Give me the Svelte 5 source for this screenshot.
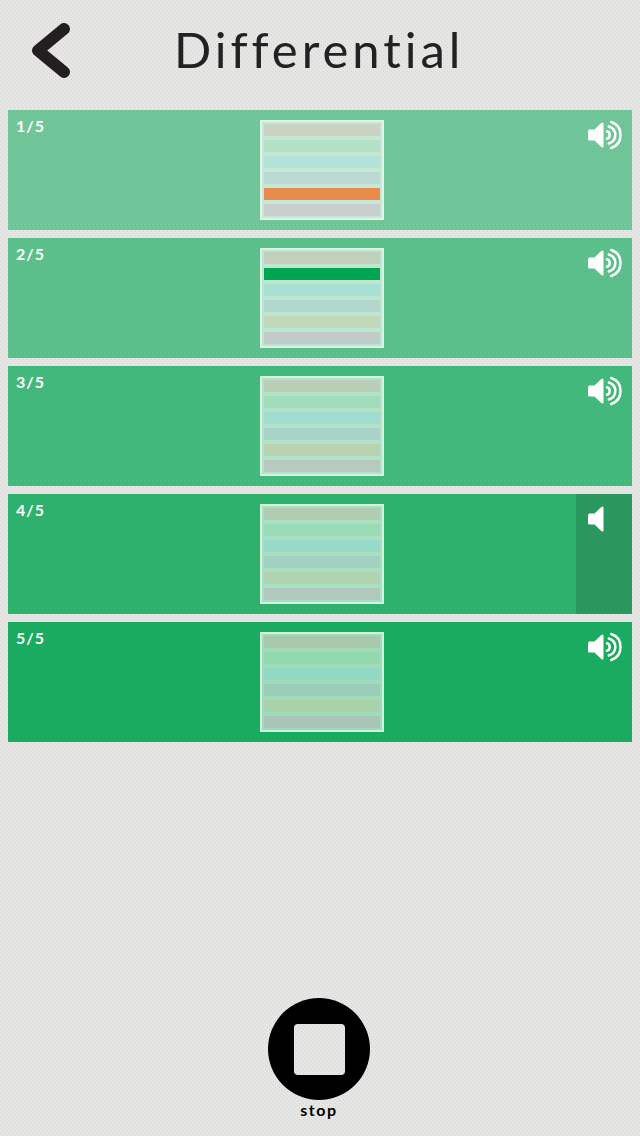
<script>
  const rows = [
    { n: 1, color: '#74c99d', line: '#e0f4e9', fill: '#c5e8d5', bars: ['#cad2c1', '#b3e1c8', '#b3e2da', '#bad9d5', '#e88b4c', '#c8cecc'] },
    { n: 2, color: '#5ec38e', line: '#daf3e5', fill: '#bce6cf', bars: ['#c2cfbb', '#00a550', '#a9e0d4', '#b2d7ce', '#c2d8ba', '#c1ccc8'] },
    { n: 3, color: '#46bb7f', line: '#d6f2e1', fill: '#b2e2c8', bars: ['#b9cdb7', '#a1ddbc', '#a0ddcf', '#a9d3c8', '#b9d3b2', '#b7c9c1'] },
    { n: 4, color: '#2fb16e', line: '#d3f1df', fill: '#aae0c2', bars: ['#b0ccb1', '#99dbb6', '#98dac9', '#a2d1c4', '#b2d3af', '#b0c8bd'], muted: true },
    { n: 5, color: '#1aab60', line: '#cff0dc', fill: '#a1dcba', bars: ['#a8c9ac', '#92d8b0', '#91d8c5', '#9aceba', '#a9d2aa', '#a8c5b7'] }
  ];
</script>

<main class="textured">
  <header>
    <button class="back" aria-label="Back">
      <svg width="40" height="56" viewBox="0 0 40 56"><path d="M33 7 7 28.5 33 50" /></svg>
    </button>
    <h1>Differential</h1>
  </header>

  <section>
    {#each rows as row}
      <article style:background-color={row.color} class:textured={row.n < 4} class:faint={row.n < 4}>
        <span class="count">{row.n}/5</span>
        <div class="pattern" style:background={row.fill} style:border-color={row.line}>
          {#each row.bars as bar}<i style:background={bar}></i>{/each}
        </div>
        <button class="sound" class:muted={row.muted} aria-label="Sound">
          <svg width="36" height="32" viewBox="0 0 36 32">
            <path class="cone" d="M1 12Q1 10.5 2.5 10.5H7.5L14.3 4Q16.5 2.5 16.5 5V27Q16.5 29.5 14.3 28L7.5 21.5H2.5Q1 21.5 1 20Z" />
            {#if !row.muted}
              <path class="wave" d="M20 12.3Q22.7 13 22.7 16T20 19.7M21.8 7.5Q28.3 9.5 28.3 16T21.8 24.5M24.2 3Q33.5 6 33.5 16T24.2 29" />
            {/if}
          </svg>
        </button>
      </article>
    {/each}
  </section>

  <footer>
    <button class="stop"><span class="disc"><span class="textured"></span></span><b>stop</b></button>
  </footer>
</main>

<style>
  main {
    box-sizing: border-box;
    width: 640px;
    height: 1136px;
    display: flex;
    flex-direction: column;
    background-color: #e9e9e7;
    font-family: Lato, sans-serif;
  }
  .textured {
    --dot: rgba(0, 0, 0, .09);
    background-image:
      radial-gradient(circle at 1.5px 1.5px, var(--dot) .5px, transparent 1.2px),
      radial-gradient(circle at 1.5px 1.5px, var(--dot) .5px, transparent 1.2px);
    background-size: 4px 4px;
    background-position: 0 0, 2px 2px;
  }
  .faint { --dot: rgba(0, 0, 0, .08); }
  button { border: 0; padding: 0; background: none; font: inherit; color: inherit; }
  svg { display: block; }
  header { height: 110px; display: grid; grid-template-columns: 176px 1fr; }
  .back { padding: 22px 0 0 31px; align-self: start; }
  .back path { fill: none; stroke: #231f20; stroke-width: 12; stroke-linecap: round; stroke-linejoin: round; }
  h1 { margin: 19px 0 0 -2px; font-size: 49px; line-height: 60px; font-weight: 400; letter-spacing: 3.95px; color: #222; font-variant-ligatures: none; white-space: nowrap; }
  section { padding: 0 8px; display: grid; gap: 8px; }
  article { height: 120px; display: grid; grid-template-columns: 252px 124px 1fr 56px; }
  .count { padding: 6px 8px; font-size: 16px; line-height: 19px; font-weight: 700; letter-spacing: 1px; color: #fff; }
  .pattern { box-sizing: border-box; height: 100px; margin-top: 10px; border: 2px solid; padding: 2px; display: grid; grid-template-rows: repeat(6, 12px); gap: 4px; }
  i { display: block; }
  .sound { grid-column: 4; padding: 9px 0 0 11px; display: flex; align-items: flex-start; }
  .muted { background: #2a985e; }
  .cone { fill: #fff; }
  .wave { fill: none; stroke: #fff; stroke-width: 2.5; stroke-linecap: round; }
  footer { margin-top: auto; height: 138px; display: flex; justify-content: center; }
  .stop { width: 102px; margin-left: -2px; display: flex; flex-direction: column; align-items: center; }
  .disc { width: 102px; height: 102px; border-radius: 50%; background: #000; display: grid; place-items: center; }
  .disc span { width: 51px; height: 51px; border-radius: 4px; background-color: #e9e9e7; }
  b { font-size: 16px; line-height: 20px; letter-spacing: 1.6px; }
</style>
